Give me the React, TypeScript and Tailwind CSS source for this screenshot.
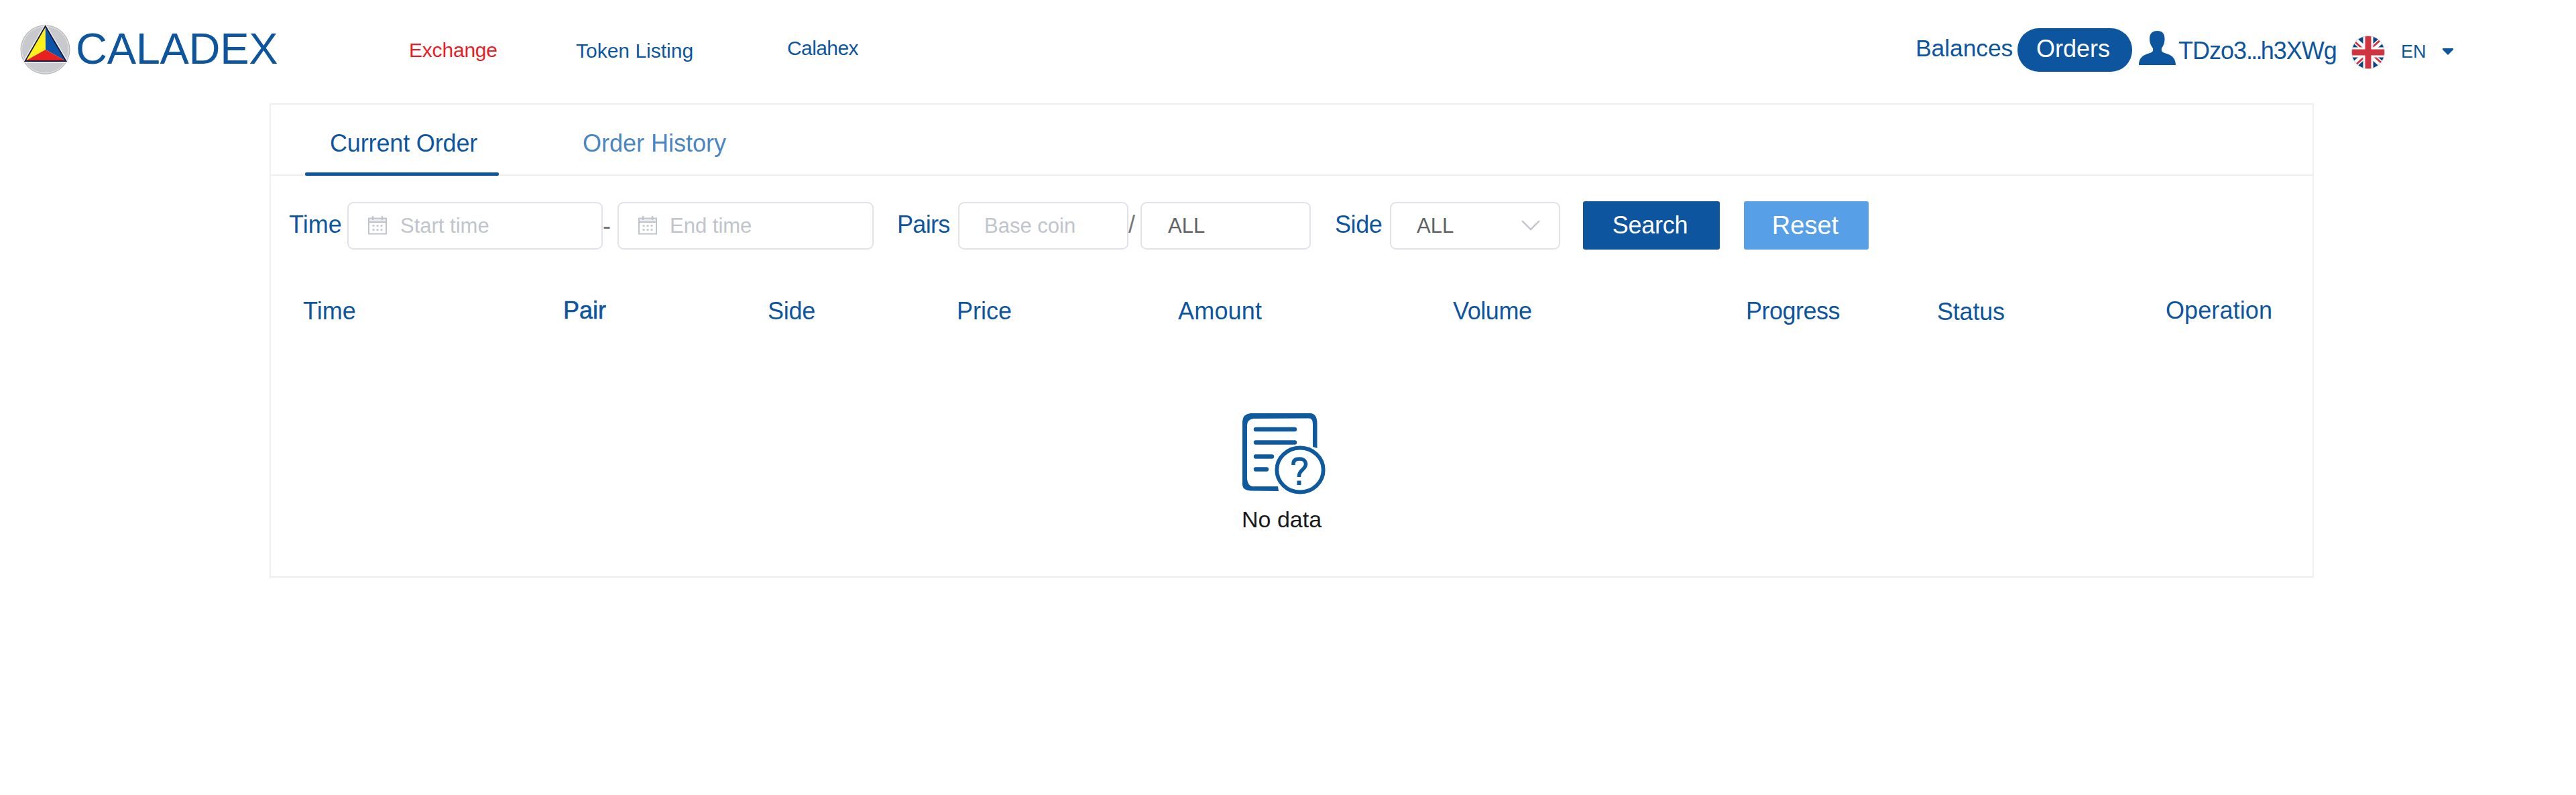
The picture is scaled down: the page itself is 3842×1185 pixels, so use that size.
import React from "react";

function Calendar() {
  return (
    <svg className="h-7 w-[30px] shrink-0" viewBox="0 0 30 28" fill="none" stroke="#c0c4cc" strokeWidth="2">
      <path d="M2 3.500H28V9H2Z" fill="#eceef2" stroke="none" />
      <rect x="2" y="3.500" width="26" height="23" />
      <path d="M2 9H28" strokeWidth="2.2" />
      <path d="M8 0V6M22 0V6" strokeWidth="2.400" />
      <path d="M7.500 14.500H10.500M13.500 14.500H16.500M19.500 14.500H22.500M7.500 20.500H10.500M13.500 20.500H16.500M19.500 20.500H22.500" strokeWidth="2.6" />
    </svg>
  );
}

function Logo() {
  return (
    <svg className="ml-[30px] h-[74px] w-[75px] shrink-0" viewBox="0 0 75 74">
      <ellipse cx="37.500" cy="37" rx="36.500" ry="36.300" fill="#c8c9cc" stroke="#b2b2b4" strokeWidth="1" />
      <ellipse cx="37.500" cy="37" rx="35" ry="34.800" fill="none" stroke="#e6e6e8" strokeWidth="1" />
      <path d="M37.700 1L6 55H70Z" fill="#fff" stroke="#ececee" strokeWidth="3.500" />
      <path d="M37.700 2L7.500 54L38 37Z" fill="#fdf01c" />
      <path d="M37.700 2L68.500 54L38 37Z" fill="#0c54a5" />
      <path d="M38 37L7.500 54H68.500Z" fill="#e8201f" />
      <path d="M37.700 2L7.500 54H68.500Z" fill="none" stroke="#15183a" strokeWidth="1.8" />
    </svg>
  );
}

function Flag() {
  return (
    <svg className="mt-[7px] ml-[20px] h-[50px] w-[50px] shrink-0" viewBox="0 0 50 50">
      <clipPath id="round">
        <circle cx="25" cy="25" r="24.500" />
      </clipPath>
      <g clipPath="url(#round)">
        <rect width="50" height="50" fill="#0b4489" />
        <path d="M-4 -1L54 51M54 -1L-4 51" stroke="#fff" strokeWidth="9" />
        <path d="M-4 1L25 27M54 -3L25 23M54 49L25 23M-4 53L25 27" stroke="#d03440" strokeWidth="2.800" />
        <path d="M25 0V50M0 25H50" stroke="#fff" strokeWidth="15" />
        <path d="M25 0V50M0 25H50" stroke="#d03440" strokeWidth="9" />
      </g>
      <circle cx="25" cy="25" r="24.500" fill="none" stroke="#ddd" strokeWidth=".7" />
    </svg>
  );
}

function Header() {
  return (
    <header className="flex h-[148px] items-center whitespace-nowrap">
      <Logo />
      <div className="mb-[4px] ml-2 w-[497px] text-[65px] leading-none tracking-[-0.3px]">CALADEX</div>
      <nav className="flex items-center text-[30px] leading-none">
        <a className="mt-[2px] w-[249px] tracking-[-0.2px] text-[#ed1c24]">Exchange</a>
        <a className="mt-[3px] w-[315px]">Token Listing</a>
        <a className="mb-[5px] w-[1683px] tracking-[-0.6px]">Calahex</a>
      </nav>
      <div className="mb-[2px] w-[152px] text-[35.5px] leading-none tracking-[-0.1px]">Balances</div>
      <div className="flex h-[65px] w-[171px] items-center justify-center rounded-[32px] bg-[#0d569f] pr-[5px] pb-[3px] text-[36px] leading-none text-white">
        Orders
      </div>
      <svg className="mb-[5px] ml-[10px] h-[51px] w-[55px] shrink-0" viewBox="0 0 55 51" fill="#0d569f">
        <path d="M27.500 0C35 0 38.500 4 38.500 12C38.500 19 36 23 34 26C33.500 29 34 31 36 32C42 34.500 55 36 55 51H0C0 36 13 34.500 19 32C21 31 21.500 29 21 26C19 23 16 19 16 12C16 4 20 0 27.500 0Z" />
      </svg>
      <div className="mt-[3px] ml-[4px] w-[238px] text-[36px] leading-none tracking-[-1px]">
        TDzo3<span className="tracking-[-2.8px]">...</span>h3XWg
      </div>
      <Flag />
      <div className="mt-[6px] ml-[24px] w-[62px] text-[27px] leading-none">EN</div>
      <svg className="mt-[6px] h-[10px] w-[16px]" viewBox="0 0 16 10" fill="#0d569f">
        <path d="M0 0H16V2L8 10L0 2Z" />
      </svg>
    </header>
  );
}

const field = "flex h-[71px] shrink-0 items-center rounded-[9px] border-2 border-[#dfe2e8] text-[31px] leading-none";

function Filters() {
  return (
    <div className="mt-[38px] flex h-[72px] items-center pl-[27px] text-[36px] leading-none whitespace-nowrap">
      <div className="mb-[2px] w-[87px]">Time</div>
      <div className={field + " w-[381px] pl-[28px] text-[#c0c4cc]"}>
        <Calendar />
        <span className="ml-[19px]">Start time</span>
      </div>
      <div className="mt-[2px] w-[22px] text-[36px] text-[#777]">-</div>
      <div className={field + " w-[382px] pl-[28px] text-[#c0c4cc]"}>
        <Calendar />
        <span className="ml-[18px]">End time</span>
      </div>
      <div className="mb-[2px] ml-[35px] w-[91px] tracking-[-0.7px]">Pairs</div>
      <div className={field + " w-[254px] pl-[37px] text-[#c0c4cc]"}>Base coin</div>
      <div className="mb-[3px] w-[18px] text-[36px] text-[#777]">/</div>
      <div className={field + " w-[254px] pl-[39px] text-[#606266]"}>ALL</div>
      <div className="mb-[2px] ml-[36px] w-[82px] tracking-[-0.4px]">Side</div>
      <div className={field + " w-[254px] justify-between pr-[28px] pl-[38px] text-[#606266]"}>
        ALL
        <svg className="h-4 w-7" viewBox="0 0 28 16" fill="none" stroke="#c0c4cc" strokeWidth="2.4">
          <path d="M1 1L14 14L27 1" />
        </svg>
      </div>
      <button className="ml-[34px] flex h-[72px] w-[204px] shrink-0 items-center justify-center rounded-[3px] bg-[#0d569f] pr-1 tracking-[-0.3px] text-white">
        Search
      </button>
      <button className="ml-[36px] flex h-[72px] w-[186px] shrink-0 items-center justify-center rounded-[3px] bg-[#57a0e8] pr-[3px] text-[38px] text-white">
        Reset
      </button>
    </div>
  );
}

function NoData() {
  return (
    <div className="mt-[134px] ml-[1449px] flex w-[126px] flex-col">
      <svg className="h-[121px] w-[124px]" viewBox="0 0 124 121" fill="none" stroke="#0d5a9f">
        <path
          fill="#0d5a9f"
          stroke="none"
          d="M12 0H102Q111 1 111.500 14V52L105 50V16Q105 7.500 99 7.500L17 8Q7 9 7 18V98Q8 108 15 109L53 109L54 116L12 115.500Q1 115 0 107V12Q1 1 12 0Z"
        />
        <path d="M20 24H78M20 43.500H78M20 64.500H44M20 83.500H36" strokeWidth="6.400" strokeLinecap="round" />
        <ellipse cx="86" cy="84.500" rx="34.700" ry="33" fill="#fff" strokeWidth="5.800" />
        <path d="M76 77V75C76 70 80 68 85.500 68C91 68 94.500 71.500 94.500 76C94.500 83 84.500 85 84.500 93V95" strokeWidth="5.500" />
        <path d="M84.500 100.500V107" strokeWidth="6" />
      </svg>
      <div className="mt-5 -ml-px text-[34px] leading-none whitespace-nowrap text-[#1a1a1a]">No data</div>
    </div>
  );
}

export default function App() {
  return (
    <div className="h-[1185px] w-[3842px] bg-white font-['Liberation_Sans',sans-serif] text-[#0d569f]">
      <Header />
      <main className="mt-[6px] ml-[402px] h-[707px] w-[3049px] border-2 border-[#efefef] text-[36px] leading-none whitespace-nowrap">
        <div className="flex h-[106px] border-b-2 border-[#efefef] pl-[51px]">
          <div className="z-10 flex h-[106px] w-[289px] flex-col justify-between">
            <span className="mt-[40px] ml-[37px] tracking-[-0.15px]">Current Order</span>
            <span className="h-[5px] shrink-0 rounded-[2px] bg-[#0d569f]" />
          </div>
          <div className="mt-[40px] ml-[125px] text-[#4a86c1]">Order History</div>
        </div>
        <Filters />
        <div className="mt-[74px] grid h-[36px] grid-cols-[388px_305px_282px_330px_410px_437px_285px_341px_200px] pl-[48px]">
          <span>Time</span>
          <span className="-mt-px [-webkit-text-stroke:0.6px_#0d569f]">Pair</span>
          <span className="tracking-[-0.3px]">Side</span>
          <span>Price</span>
          <span className="tracking-[0.2px]">Amount</span>
          <span className="tracking-[-0.4px]">Volume</span>
          <span className="tracking-[-0.5px]">Progress</span>
          <span className="mt-px tracking-[-0.2px]">Status</span>
          <span className="-mt-px tracking-[0.1px]">Operation</span>
        </div>
        <NoData />
      </main>
    </div>
  );
}
